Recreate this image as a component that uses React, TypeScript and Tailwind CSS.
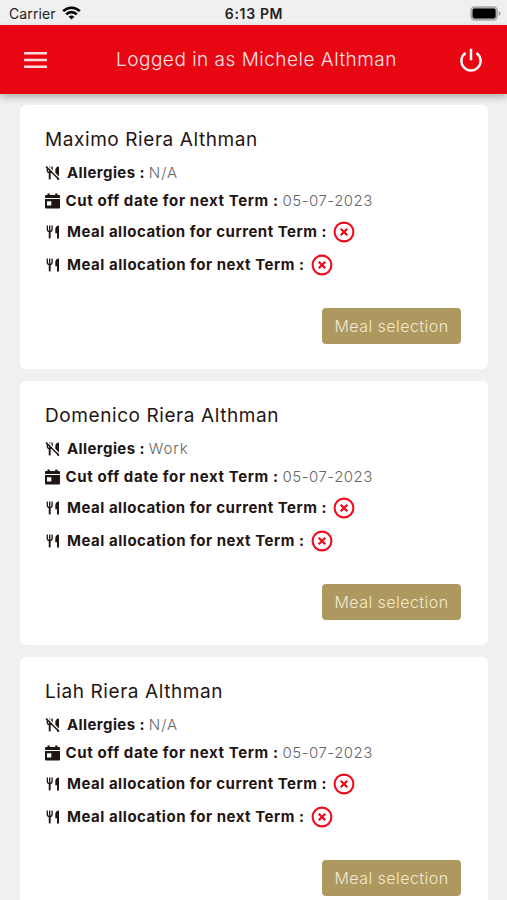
import React from 'react';

interface Student {
  name: string;
  allergies: string;
  cutOff: string;
}

const students: Student[] = [
  { name: 'Maximo Riera Althman', allergies: 'N/A', cutOff: '05-07-2023' },
  { name: 'Domenico Riera Althman', allergies: 'Work', cutOff: '05-07-2023' },
  { name: 'Liah Riera Althman', allergies: 'N/A', cutOff: '05-07-2023' },
];

const CutleryIcon = ({ crossed = false }: { crossed?: boolean }) => (
  <svg className="w-[15px] h-[14px] shrink-0" viewBox="0 0 15 14" fill="none" stroke="currentColor">
    <path d="M2.3 .6v3.7c0 1.5 1 2.3 2.4 2.3s2.4-.8 2.4-2.3V.6M4.700 .6v5" strokeWidth="1.3" />
    <path d="M4.700 5.500v7.900" strokeWidth="1.900" />
    <path d="M14 .6v12.800h-2V8.300h-1.700V4.400c0-2.200 1.500-3.800 3.700-3.800z" fill="currentColor" stroke="none" />
    {crossed && (
      <>
        <path d="M2.400 0 14.900 12.300" stroke="white" strokeWidth="1.300" />
        <path d="M1 .6 14 13.400" strokeWidth="1.400" />
      </>
    )}
  </svg>
);

const CalendarIcon = () => (
  <svg className="-ml-[0.5px] w-[15px] h-4 shrink-0" viewBox="0 0 15 16" fill="currentColor">
    <path d="M2.500.5h2.300V2h5.400V.5h2.300V2H14a1 1 0 0 1 1 1v2H0V3a1 1 0 0 1 1-1h1.500z" />
    <path fillRule="evenodd" d="M0 6h15v8.500a1 1 0 0 1-1 1H1a1 1 0 0 1-1-1zM2 8.200v4.300h4.300V8.200z" />
  </svg>
);

const CrossIcon = () => (
  <svg className="w-[22px] h-[22px] shrink-0" viewBox="0 0 22 22" fill="none" stroke="#f00d1c">
    <circle cx="11" cy="11" r="9.400" strokeWidth="2.100" />
    <path d="m7.700 7.700 6.600 6.600M14.300 7.700l-6.600 6.600" strokeWidth="2.300" />
  </svg>
);

const StatusBar = () => (
  <div className="h-[25px] grid grid-cols-3 items-center pl-[9px] pr-[6px] pt-[3px] text-[14px] text-[#222]">
    <div className="flex items-center gap-[6px]">
      <span className="w-[47px] -mt-px whitespace-nowrap tracking-[0.1px]">Carrier</span>
      <svg className="w-[19px] h-[14px] -mt-[3px]" viewBox="0 0 19 14" fill="none" stroke="#050505" strokeWidth="2.6">
        <path d="M1.2 5.2c4.7-4.7 11.9-4.7 16.6 0" />
        <path d="M4.2 8.4c3-3 7.6-3 10.6 0" />
        <path d="M9.5 13.6 6.6 10.7c1.6-1.5 4.2-1.5 5.8 0z" fill="#050505" stroke="none" />
      </svg>
    </div>
    <div className="-ml-[2px] -mt-px text-center font-semibold tracking-[0.65px] whitespace-nowrap">6:13 PM</div>
    <svg className="w-[31px] h-[15px] justify-self-end -mt-[2px]" viewBox="0 0 31 15">
      <rect x="1" y="1" width="26.200" height="13" rx="3.500" fill="#b5b5b5" stroke="#a8a8a8" strokeWidth="1.400" />
      <rect x="2.600" y="2.600" width="23" height="9.800" rx="1.800" fill="#000" />
      <path d="M28.600 5v5c1.400-.5 2.100-1.400 2.100-2.500S30 5.500 28.600 5z" fill="#a8a8a8" />
    </svg>
  </div>
);

const Header = () => (
  <header className="relative h-[69px] flex items-center justify-between pl-6 pr-[25px] bg-[#e90613] text-white shadow-[0_3px_7px_rgba(0,0,0,0.28)]">
    <button aria-label="Menu">
      <svg className="w-[23px] h-4" viewBox="0 0 23 16" stroke="#ffdcdc" strokeWidth="2.4">
        <path d="M0 1.300h23M0 8h23M0 14.700h23" />
      </svg>
    </button>
    <h1 className="ml-[6px] pt-[2px] text-[19px] font-light tracking-[0.5px] text-[#ffe3e3] whitespace-nowrap">
      Logged in as Michele Althman
    </h1>
    <button aria-label="Log out">
      <svg className="w-[22px] h-6" viewBox="0 0 22 24" fill="none" stroke="white" strokeWidth="2.5">
        <path d="M11 .8v11.400M5.600 5A9.600 9.600 0 1 0 16.400 5" />
      </svg>
    </button>
  </header>
);

const StudentCard = ({ student }: { student: Student }) => (
  <section className="h-[264px] shrink-0 rounded-[6px] bg-white pl-[25px] pr-[27px] pt-[18px] text-[15px] text-[#1f1513] whitespace-nowrap">
    <h2 className="h-8 flex items-center pt-[2px] text-[19px] tracking-[0.58px]">{student.name}</h2>
    <div className="mt-1 h-7 flex items-center">
      <CutleryIcon crossed />
      <span className="ml-[7px] font-bold tracking-[0.4px]">Allergies :</span>
      <span className="ml-1 font-light tracking-[0.9px] text-[#666]">{student.allergies}</span>
    </div>
    <div className="h-7 flex items-center">
      <CalendarIcon />
      <span className="ml-[6px] font-bold tracking-[0.6px]">Cut off date for next Term :</span>
      <span className="ml-1 font-light tracking-[0.5px] text-[#666]">{student.cutOff}</span>
    </div>
    <div className="h-[33px] flex items-center">
      <CutleryIcon />
      <span className="ml-[7px] mr-[6px] pt-px font-bold tracking-[0.5px]">Meal allocation for current Term :</span>
      <CrossIcon />
    </div>
    <div className="h-[33px] flex items-center">
      <CutleryIcon />
      <span className="ml-[7px] mr-[6px] pt-px font-bold tracking-[0.52px]">Meal allocation for next Term :</span>
      <CrossIcon />
    </div>
    <div className="mt-[27px] flex justify-end">
      <button className="w-[139px] h-9 rounded-[4px] bg-[#ad9860] text-[16px] font-light tracking-[0.45px] text-[#f4e9cd]">
        Meal selection
      </button>
    </div>
  </section>
);

export default function App() {
  return (
    <div className="h-[900px] w-[507px] overflow-hidden bg-[#f0f0f0] font-['Inter',sans-serif]">
      <StatusBar />
      <Header />
      <main className="flex flex-col gap-3 pl-5 pr-[19px] pt-[11px]">
        {students.map((student) => (
          <StudentCard key={student.name} student={student} />
        ))}
      </main>
    </div>
  );
}
